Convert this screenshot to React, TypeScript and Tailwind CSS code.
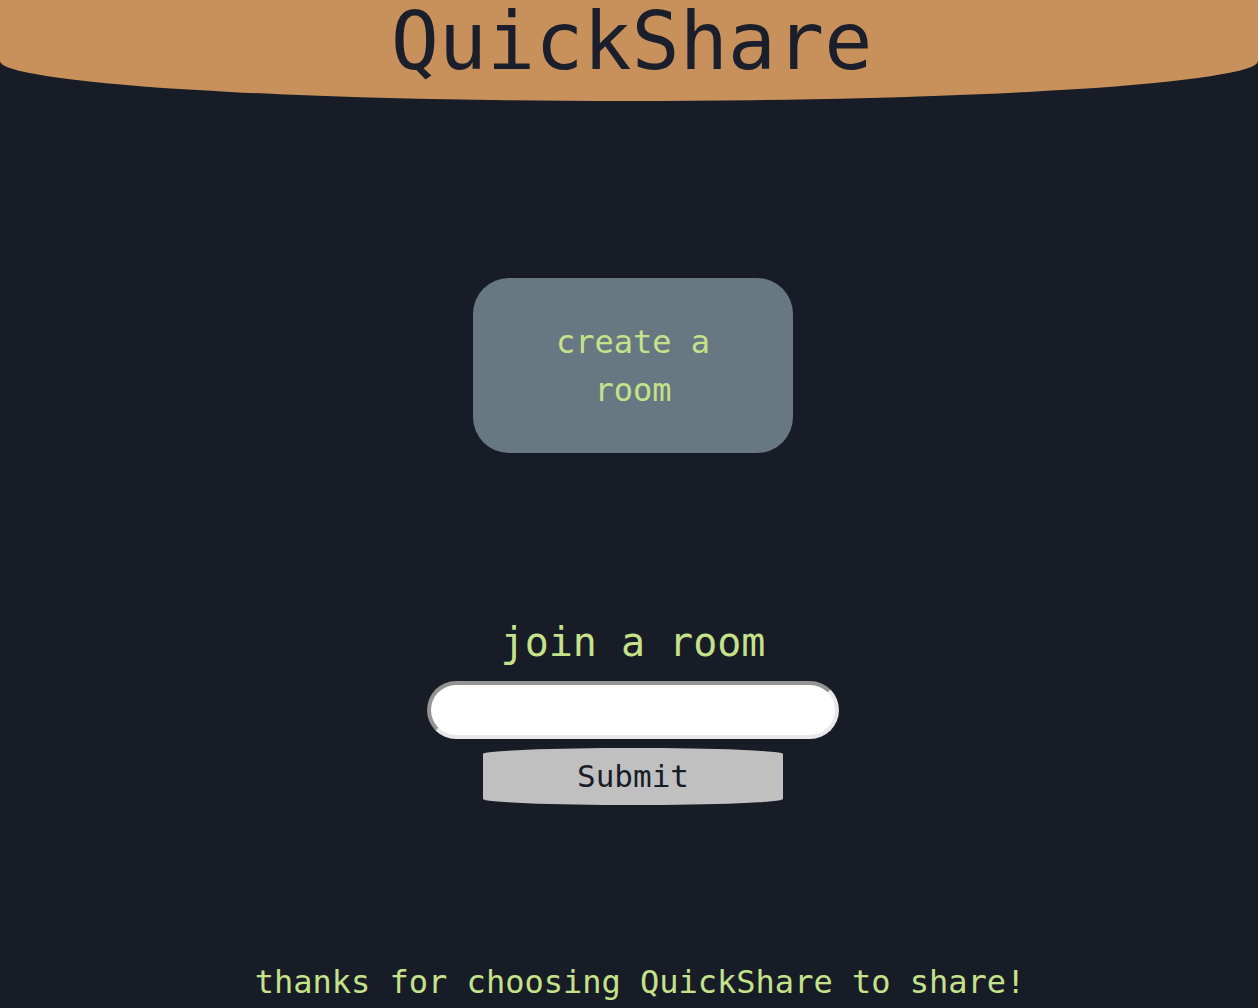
export default function App() {
  const mono = { fontFamily: '"DejaVu Sans Mono", "Liberation Mono", monospace' };

  return (
    <div className="min-h-[1008px] bg-[#181c27] overflow-hidden" style={mono}>
      {/* header with curved bottom */}
      <header className="h-[101px] w-full bg-[#c8915c] rounded-b-[50%_40px] pt-[2px] pl-[5px]">
        <h1 className="text-center text-[80px] leading-none text-[#1b1f2b] tracking-[0px]">QuickShare</h1>
      </header>

      <main className="flex flex-col items-center pl-[8px]">
        {/* create a room */}
        <button className="mt-[177px] w-[320px] h-[175px] rounded-[36px] bg-[#687882] px-12 text-[32px] leading-[48px] text-[#c5e28a]">
          create a room
        </button>

        {/* join a room */}
        <h2 className="mt-[169px] text-[40px] leading-none text-[#c5e28a]">join a room</h2>
        <input
          type="text"
          className="mt-[19px] w-[412px] h-[58px] rounded-full bg-white border-4 [border-style:inset] border-[#e8e8e8] px-5 text-[24px] outline-none"
        />
        <button className="mt-[9px] w-[300px] h-[57px] rounded-[50%/6px] bg-[#c0c0c0] text-[31px] leading-none text-[#181c27]">
          Submit
        </button>
      </main>

      <footer className="mt-[161px] pl-[22px] text-center text-[32px] leading-none text-[#c5e28a]">
        thanks for choosing QuickShare to share!
      </footer>
    </div>
  );
}
